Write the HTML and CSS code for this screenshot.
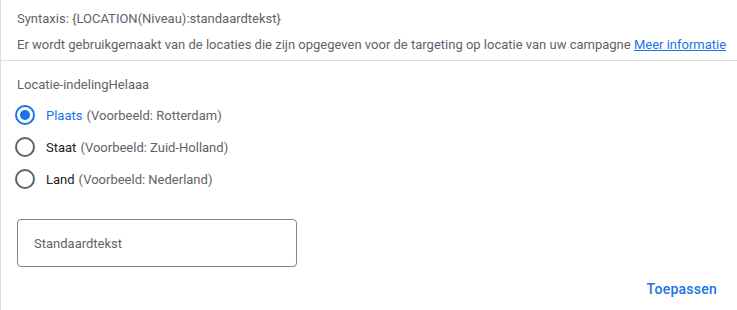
FILE: index.html
```html
<!DOCTYPE html>
<html lang="nl">
<head>
<meta charset="utf-8">
<link rel="stylesheet" href="styles.css">
</head>
<body>
<div class="panel">
  <div class="info">
    <div class="info-line">Syntaxis: {LOCATION(Niveau):standaardtekst}</div>
    <div class="info-line">Er wordt gebruikgemaakt van de locaties die zijn opgegeven voor de targeting op locatie van uw campagne <a class="link" href="#">Meer informatie</a></div>
  </div>
  <div class="body">
    <div class="group-label">Locatie-indelingHelaaa</div>
    <div class="radios">
      <label class="radio checked"><span class="circle"></span><span class="name">Plaats</span><span class="hint">(Voorbeeld: Rotterdam)</span></label>
      <label class="radio"><span class="circle"></span><span class="name">Staat</span><span class="hint">(Voorbeeld: Zuid-Holland)</span></label>
      <label class="radio"><span class="circle"></span><span class="name">Land</span><span class="hint">(Voorbeeld: Nederland)</span></label>
    </div>
    <div class="field"><span class="placeholder">Standaardtekst</span></div>
    <div class="actions"><button class="apply">Toepassen</button></div>
  </div>
</div>
</body>
</html>
```
FILE: styles.css
```css
html, body {
  margin: 0;
  padding: 0;
  background: #fff;
  font-family: Roboto, "Noto Sans", Arial, sans-serif;
}
.panel {
  border-left: 1px solid #dadce0;
  height: 310px;
  box-sizing: border-box;
}
.info {
  padding: 9px 8px 5px 16px;
  border-bottom: 1px solid #dadce0;
  font-size: 13px;
  color: #5f6368;
}
.info-line {
  line-height: 20px;
  margin-bottom: 6px;
  white-space: nowrap;
}
.info-line:last-child {
  margin-bottom: 0;
}
.link {
  color: #1a73e8;
  text-decoration: underline;
}
.body {
  padding: 15px 16px 0 16px;
}
.group-label {
  font-size: 13px;
  color: #5f6368;
  line-height: 18px;
}
.radios {
  display: flex;
  flex-direction: column;
  gap: 12px;
  margin-top: 11px;
}
.radio {
  display: flex;
  align-items: center;
  height: 20px;
  font-size: 13px;
  color: #202124;
}
.circle {
  width: 16px;
  height: 16px;
  border: 2px solid #5f6368;
  border-radius: 50%;
  margin-left: -2px;
  margin-right: 11px;
  box-sizing: content-box;
  display: flex;
  align-items: center;
  justify-content: center;
}
.radio.checked .circle {
  border-color: #1a73e8;
}
.radio.checked .circle::after {
  content: "";
  width: 10px;
  height: 10px;
  border-radius: 50%;
  background: #1a73e8;
}
.radio.checked .name {
  color: #1a73e8;
}
.hint {
  color: #5f6368;
  margin-left: 4px;
}
.field {
  margin-top: 30px;
  width: 280px;
  height: 48px;
  box-sizing: border-box;
  border: 1px solid #80868b;
  border-radius: 4px;
  display: flex;
  align-items: center;
  padding-left: 16px;
}
.placeholder {
  font-size: 13px;
  color: #5f6368;
}
.actions {
  display: flex;
  justify-content: flex-end;
  margin-top: 14px;
  padding-right: 4px;
}
.apply {
  border: none;
  background: none;
  padding: 0;
  font-family: inherit;
  font-size: 14px;
  font-weight: 500;
  letter-spacing: 0.25px;
  color: #1a73e8;
  cursor: pointer;
}
```
